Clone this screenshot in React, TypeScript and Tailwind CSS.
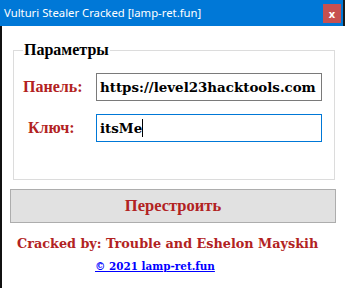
const cyr = { fontFamily: '"Liberation Serif", "Times New Roman", serif' };
const lat = { fontFamily: '"DejaVu Serif", "Liberation Serif", serif' };

const App = () => {
  return (
    <div className="w-[345px] h-[288px] bg-white flex flex-col overflow-hidden">
      {/* title bar */}
      <div className="h-[26px] bg-[#0078d7] flex items-center pl-[4px] pr-[2px] border-r-2 border-[#1b1b1b]">
        <span
          className="text-white text-[11.3px] flex-1 leading-none"
          style={{ fontFamily: '"Noto Sans", "Open Sans", sans-serif' }}
        >
          Vulturi Stealer Cracked [lamp-ret.fun]
        </span>
        <button className="w-[18px] h-[19px] bg-[#c75050] text-white text-[11px] font-bold leading-none flex items-center justify-center">
          x
        </button>
      </div>

      {/* body */}
      <div className="flex-1 flex flex-col border-l-2 border-[#111]" style={cyr}>
        <fieldset className="mt-[16px] ml-[11px] w-[322px] h-[138px] border border-[#dcdcdc] px-[9px] pt-[8px]">
          <legend className="px-[1px] text-[16px] font-bold text-black leading-none">Параметры</legend>
          <div className="flex items-center mt-[7px]">
            <span className="w-[73px] text-[16px] font-bold text-[#b22222]">Панель:</span>
            <div className="w-[226px] h-[28px] border border-[#7a7a7a] flex items-center px-[3px]">
              <span className="text-[13.4px] font-bold text-black whitespace-nowrap" style={lat}>
                https://level23hacktools.com
              </span>
            </div>
          </div>
          <div className="flex items-center mt-[13px]">
            <span className="w-[73px] pl-[5px] text-[16px] font-bold text-[#b22222]">Ключ:</span>
            <div className="w-[226px] h-[28px] border border-[#0078d7] flex items-center px-[3px]">
              <span className="text-[13.4px] font-bold text-black" style={lat}>itsMe</span>
              <span className="w-px h-[18px] bg-black" />
            </div>
          </div>
        </fieldset>

        <button className="mt-[9px] ml-[8px] w-[326px] h-[34px] bg-[#e1e1e1] border border-[#adadad] text-[16.5px] font-bold text-[#b22222]">
          Перестроить
        </button>

        <div className="mt-[15px] pl-[15px] text-[12.8px] font-bold text-[#b22222] leading-none whitespace-nowrap" style={lat}>
          Cracked by: Trouble and Eshelon Mayskih
        </div>
        <div className="mt-[10px] pl-[93px] text-[10.4px] font-bold text-[#0000ff] underline leading-none" style={lat}>
          © 2021 lamp-ret.fun
        </div>
      </div>
    </div>
  );
};

export default App;
